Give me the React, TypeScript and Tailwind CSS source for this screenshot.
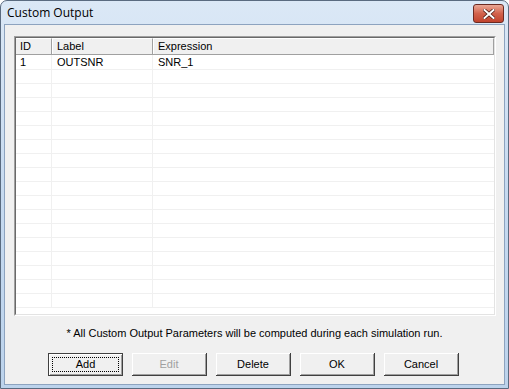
import React from "react";

const rows = Array.from({ length: 18 });

function Btn({ label, def, disabled }: { label: string; def?: boolean; disabled?: boolean }) {
  return (
    <div
      className={
        "w-[75px] h-[23px] flex " +
        (def ? "border border-[#404040]" : "border-r border-b border-[#404040]")
      }
    >
      <div className="flex-1 flex border-t border-l border-white bg-[#f0f0f0]">
        <div className="flex-1 flex border-r border-b border-[#a0a0a0] p-[2px]">
          <div
            className={
              "flex-1 flex items-center justify-center " +
              (def ? "border border-dotted border-black " : "") +
              (disabled ? "text-[#a0a0a0]" : "text-black")
            }
          >
            {label}
          </div>
        </div>
      </div>
    </div>
  );
}

export default function App() {
  return (
    <div
      className="w-[509px] h-[389px] flex flex-col border border-[#5a6b80] rounded-t-[7px] bg-gradient-to-b from-[#dbe8f6] via-[#c6daf0] to-[#bcd3ec] px-[3px] pb-[3px] overflow-hidden"
      style={{ fontFamily: "'Liberation Sans', Arial, sans-serif" }}
    >
      <div className="h-[23px] flex items-center justify-between pl-[3px] pr-[1px]">
        <span className="text-[12px] text-black" style={{ fontFamily: "'Open Sans', 'Noto Sans', sans-serif" }}>
          Custom Output
        </span>
        <div className="w-[31px] h-[19px] mt-[2px] rounded-[3px] border border-[#6b2a22] bg-gradient-to-b from-[#eaa796] via-[#d2624c] to-[#c1432d] flex items-center justify-center">
          <svg width="12" height="10" viewBox="0 0 12 10">
            <path d="M1.5 1 L10.5 9 M10.5 1 L1.5 9" stroke="#4a1a14" strokeWidth="3.4" strokeLinecap="square" />
            <path d="M1.5 1 L10.5 9 M10.5 1 L1.5 9" stroke="#ffffff" strokeWidth="2" strokeLinecap="square" />
          </svg>
        </div>
      </div>
      <div className="flex-1 flex flex-col bg-[#f0f0f0] border border-[#8da3bf] text-[11px] text-black">
        <div className="mt-[11px] ml-[9px] mr-[8px] h-[280px] flex flex-col border-t border-l border-[#a0a0a0] border-r border-b border-r-white border-b-white">
          <div className="flex-1 flex flex-col border-t border-l border-[#696969] border-r border-b border-r-[#e3e3e3] border-b-[#e3e3e3] bg-white overflow-hidden">
            <div className="h-[17px] shrink-0 flex bg-[#f0f0f0] border-b border-[#a0a0a0]">
              <div className="w-[36px] flex items-center pl-[4px] border-r border-[#a0a0a0] border-t border-t-white">ID</div>
              <div className="w-[101px] flex items-center pl-[4px] border-l border-white border-r border-r-[#a0a0a0] border-t border-t-white">Label</div>
              <div className="flex-1 flex items-center pl-[4px] border-l border-white border-r border-r-[#a0a0a0] border-t border-t-white">Expression</div>
            </div>
            {rows.map((_, i) => (
              <div key={i} className={(i === 0 ? "h-[15px] " : "h-[14px] ") + "flex border-b border-[#f0f0f0] shrink-0"}>
                <div className="w-[36px] pl-[4px] border-r border-[#f0f0f0] flex items-center">{i === 0 ? "1" : ""}</div>
                <div className="w-[101px] pl-[5px] border-r border-[#f0f0f0] flex items-center">{i === 0 ? "OUTSNR" : ""}</div>
                <div className="flex-1 pl-[5px] flex items-center">{i === 0 ? "SNR_1" : ""}</div>
              </div>
            ))}
          </div>
        </div>
        <div className="mt-[10px] text-center h-[14px] leading-[14px]">
          * All Custom Output Parameters will be computed during each simulation run.
        </div>
        <div className="mt-[13px] flex gap-[9px] pl-[43px]">
          <Btn label="Add" def />
          <Btn label="Edit" disabled />
          <Btn label="Delete" />
          <Btn label="OK" />
          <Btn label="Cancel" />
        </div>
      </div>
    </div>
  );
}
